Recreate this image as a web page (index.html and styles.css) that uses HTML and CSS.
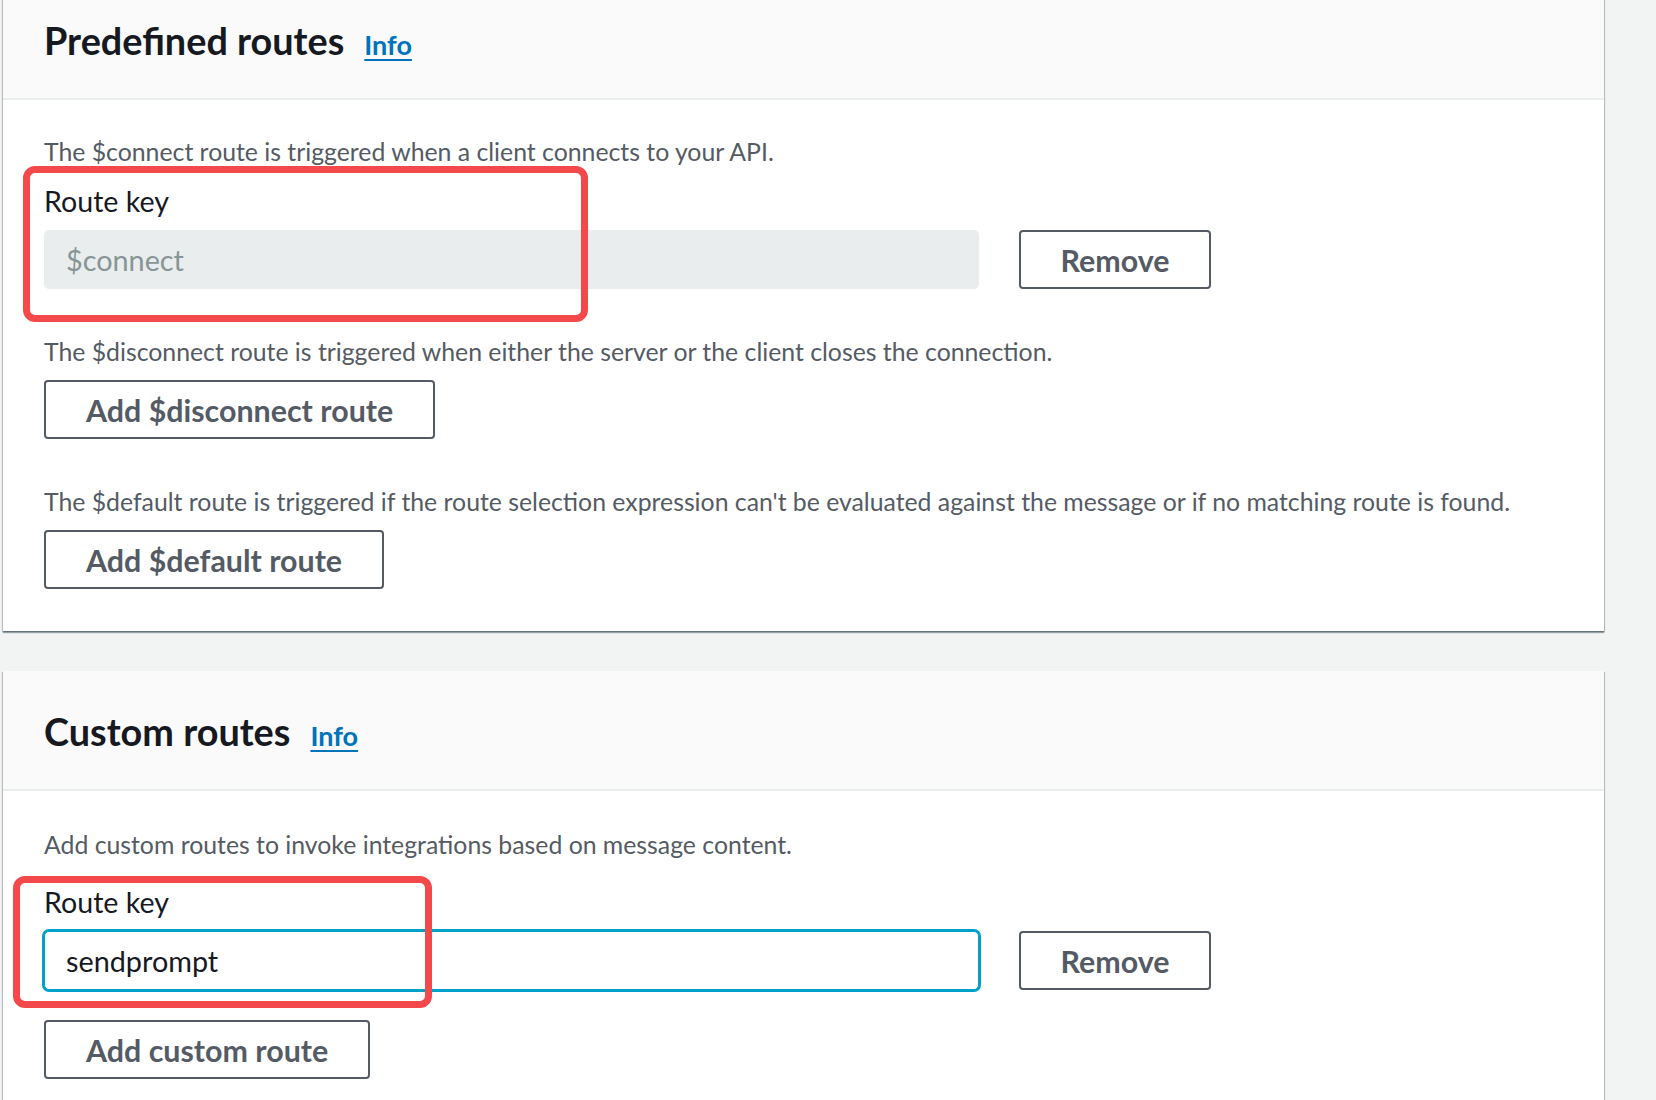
FILE: index.html
```html
<!DOCTYPE html>
<html lang="en">
<head>
<meta charset="utf-8">
<title>Routes</title>
<link rel="stylesheet" href="styles.css">
</head>
<body>
<main class="page">
  <section class="card card-predefined">
    <header class="card-header">
      <h2 class="card-title">Predefined routes</h2>
      <a class="info-link" href="#">Info</a>
    </header>
    <div class="card-body">
      <p class="desc desc-first">The $connect route is triggered when a client connects to your API.</p>
      <div class="field-row row-connect">
        <div class="field">
          <label class="field-label">Route key</label>
          <div class="input input-disabled">$connect</div>
        </div>
        <button class="btn btn-remove" type="button">Remove</button>
      </div>
      <p class="desc desc-gap">The $disconnect route is triggered when either the server or the client closes the connection.</p>
      <button class="btn btn-add" type="button">Add $disconnect route</button>
      <p class="desc desc-gap">The $default route is triggered if the route selection expression can't be evaluated against the message or if no matching route is found.</p>
      <button class="btn btn-add" type="button">Add $default route</button>
    </div>
    <div class="annot annot-one"></div>
  </section>

  <section class="card card-custom">
    <header class="card-header">
      <h2 class="card-title">Custom routes</h2>
      <a class="info-link" href="#">Info</a>
    </header>
    <div class="card-body body-custom">
      <p class="desc desc-first">Add custom routes to invoke integrations based on message content.</p>
      <div class="field-row row-custom">
        <div class="field">
          <label class="field-label">Route key</label>
          <div class="input input-focus">sendprompt</div>
        </div>
        <button class="btn btn-remove" type="button">Remove</button>
      </div>
      <button class="btn btn-add btn-custom" type="button">Add custom route</button>
    </div>
    <div class="annot annot-two"></div>
  </section>
</main>
</body>
</html>
```

FILE: styles.css
```css
* {
  box-sizing: border-box;
}

html, body {
  margin: 0;
  padding: 0;
  background: #f2f3f3;
  font-family: Lato, "Liberation Sans", sans-serif;
  color: #16191f;
}

.page {
  margin-top: -20px;
  padding-left: 3px;
  display: flex;
  flex-direction: column;
  gap: 40px;
}

.card {
  position: relative;
  width: 1601px;
  background: #ffffff;
  box-shadow: 0 2px 1px 0 rgba(0, 28, 36, 0.35),
              1px 1px 1px 0 rgba(0, 28, 36, 0.2),
              -1px 1px 1px 0 rgba(0, 28, 36, 0.2);
}

.card-header {
  height: 120px;
  background: #fafafa;
  border-bottom: 2px solid #eaeded;
  padding: 39px 41px 0;
  display: flex;
  align-items: baseline;
  gap: 20px;
}

.card-title {
  margin: 0;
  font-size: 37.8px;
  font-weight: 700;
  line-height: 44px;
  color: #16191f;
}

.info-link {
  font-size: 27px;
  font-weight: 700;
  color: #0073bb;
  text-decoration: underline;
  text-decoration-thickness: 2px;
  text-underline-offset: 4px;
}

.card-body {
  padding: 35px 41px 42px;
  display: flex;
  flex-direction: column;
  align-items: flex-start;
}

.body-custom {
  padding-top: 37px;
  padding-bottom: 0;
  height: 310px;
}

.desc {
  margin: 0;
  font-size: 24.8px;
  line-height: 34px;
  color: #545b64;
}

.desc-gap {
  margin-top: 46px;
}

.field-row {
  display: flex;
  align-items: flex-end;
  gap: 40px;
  margin-top: 15px;
}

.row-custom {
  margin-top: 23px;
}

.field {
  display: flex;
  flex-direction: column;
  gap: 12px;
}

.field-label {
  font-size: 28.6px;
  line-height: 34px;
  color: #16191f;
}

.input {
  width: 935px;
  height: 59px;
  border-radius: 5px;
  padding: 0 22px;
  display: flex;
  align-items: center;
  font-size: 28.8px;
}

.input-disabled {
  background: #eaeded;
  color: #879596;
}

.input-focus {
  background: #ffffff;
  color: #16191f;
  border: 1px solid #00a1c9;
  box-shadow: 0 0 0 2px #00a1c9;
  padding-left: 21px;
}

.btn {
  height: 59px;
  padding: 0 40px;
  background: #ffffff;
  border: 2px solid #545b64;
  border-radius: 4px;
  font-family: Lato, "Liberation Sans", sans-serif;
  font-size: 30.4px;
  font-weight: 700;
  color: #545b64;
  display: flex;
  align-items: center;
  justify-content: center;
}

.btn-remove {
  width: 192px;
}

.btn-add {
  margin-top: 11px;
}

.btn-custom {
  margin-top: 30px;
}

.annot {
  position: absolute;
  border: 7px solid #f4494a;
  border-radius: 12px;
  pointer-events: none;
}

.annot-one {
  top: 186px;
  left: 20px;
  width: 565px;
  height: 156px;
}

.annot-two {
  top: 205px;
  left: 10px;
  width: 419px;
  height: 132px;
}
```
